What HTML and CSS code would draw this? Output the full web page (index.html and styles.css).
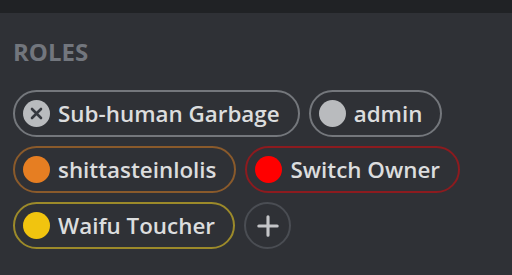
FILE: index.html
```html
<!DOCTYPE html>
<html>
<head>
<meta charset="utf-8">
<link rel="stylesheet" href="styles.css">
</head>
<body>
<div class="topbar"></div>
<section class="roles">
  <h2 class="title">ROLES</h2>
  <div class="list">
    <div class="pill pill-gray">
      <span class="remove"><svg viewBox="0 0 27 27" width="27" height="27"><circle cx="13.5" cy="13.5" r="13.5" fill="#b9bbbe"/><path d="M9 9 L18 18 M18 9 L9 18" stroke="#36393f" stroke-width="2.6" stroke-linecap="round"/></svg></span>
      <span class="name">Sub-human Garbage</span>
    </div>
    <div class="pill pill-gray">
      <span class="dot dot-gray"></span>
      <span class="name">admin</span>
    </div>
    <div class="pill pill-orange">
      <span class="dot dot-orange"></span>
      <span class="name">shittasteinlolis</span>
    </div>
    <div class="pill pill-red">
      <span class="dot dot-red"></span>
      <span class="name">Switch Owner</span>
    </div>
    <div class="pill pill-yellow">
      <span class="dot dot-yellow"></span>
      <span class="name">Waifu Toucher</span>
    </div>
    <div class="add"><svg viewBox="0 0 24 24" width="22" height="22"><path d="M12 2 V22 M2 12 H22" stroke="#c4c5c8" stroke-width="3.4" stroke-linecap="round"/></svg></div>
  </div>
</section>
</body>
</html>
```
FILE: styles.css
```css
html, body {
  margin: 0;
  padding: 0;
  background: #2f3136;
  width: 512px;
  height: 275px;
  overflow: hidden;
}
body {
  font-family: "Open Sans", "Liberation Sans", sans-serif;
}
.topbar {
  height: 13px;
  background: #202225;
}
.roles {
  padding: 0 0 0 13px;
}
.title {
  margin: 0;
  padding-top: 24px;
  font-size: 24px;
  line-height: 30px;
  font-weight: 700;
  color: #72767d;
}
.list {
  display: flex;
  flex-wrap: wrap;
  gap: 9px 9px;
  margin-top: 23px;
  width: 480px;
}
.pill {
  box-sizing: border-box;
  height: 47px;
  display: flex;
  align-items: center;
  border: 2px solid #6f7378;
  border-radius: 24px;
  padding: 0 18px 0 8px;
}
.pill-gray { border-color: #74777c; }
.pill-orange { border-color: #8a5a2b; }
.pill-red { border-color: #8c1b1f; }
.pill-yellow { border-color: #9c8a2a; }
.remove { display: flex; width: 27px; height: 27px; }
.dot {
  width: 27px;
  height: 27px;
  border-radius: 50%;
}
.dot-gray { background: #b9bbbe; }
.dot-orange { background: #e67e22; }
.dot-red { background: #ff0000; }
.dot-yellow { background: #f1c40f; }
.name {
  margin-left: 8px;
  font-size: 22.4px;
  font-weight: 600;
  color: #dcddde;
  white-space: nowrap;
}
.add {
  box-sizing: border-box;
  width: 47px;
  height: 47px;
  border: 2px solid #4a4d53;
  border-radius: 50%;
  display: flex;
  align-items: center;
  justify-content: center;
}
```
